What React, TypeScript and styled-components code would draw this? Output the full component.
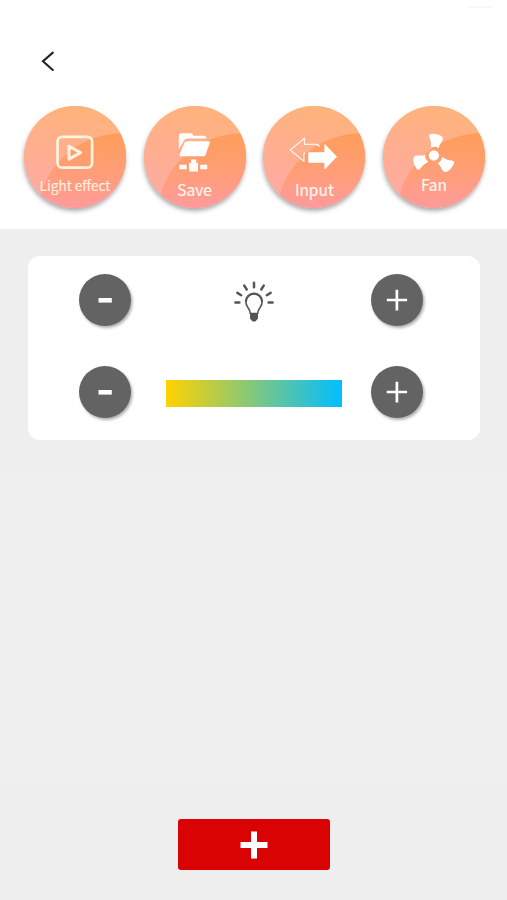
import React from "react";
import styled, { createGlobalStyle } from "styled-components";

const GlobalStyle = createGlobalStyle`
  * { box-sizing: border-box; }
  body { margin: 0; background: #eeeeee; font-family: "Noto Sans CJK SC", "Noto Sans", sans-serif; }
  button { border: 0; padding: 0; font: inherit; cursor: pointer; }
`;

const Screen = styled.main`
  width: 507px;
  height: 900px;
  display: flex;
  flex-direction: column;
  align-items: center;
  overflow: hidden;
  background: linear-gradient(#eeeeee 467px, #efefef 467px 788px, #eeeeee 788px);
`;

const Header = styled.header`
  width: 100%;
  height: 229px;
  flex: none;
  display: flex;
  flex-direction: column;
  background: #fff;
`;

const StatusBar = styled.div`
  height: 48px;
  padding: 6px 13px 0 0;
  display: flex;
  justify-content: flex-end;
`;

const StatusMark = styled.span`
  width: 26px;
  height: 2px;
  border-radius: 1px;
  background: #f8f8f8;
`;

const BackButton = styled.button`
  width: 28px;
  height: 28px;
  margin-left: 34px;
  background: none;
  svg { display: block; }
`;

const Actions = styled.nav`
  display: flex;
  justify-content: space-between;
  padding: 0 22px 0 24px;
  margin-top: 30px;
`;

const ActionButton = styled.button`
  position: relative;
  width: 102px;
  height: 102px;
  border-radius: 50%;
  background: linear-gradient(#ffb37b, #ffa09e);
  box-shadow: -0.5px 3px 4px rgba(70, 70, 70, 0.45);
`;

const Face = styled.svg`
  position: absolute;
  inset: 0;
  width: 100%;
  height: 100%;
  overflow: visible;
`;

const ActionLabel = styled.span<{ $top: number; $size: number; $color?: string }>`
  position: absolute;
  left: 0;
  right: 0;
  top: ${(p) => p.$top}px;
  line-height: 24px;
  font-size: ${(p) => p.$size}px;
  color: ${(p) => p.$color ?? "#fff5ee"};
  -webkit-text-stroke: 0.2px currentColor;
  white-space: nowrap;
  text-align: center;
`;

const Panel = styled.section`
  width: 452px;
  height: 184px;
  margin-top: 27px;
  padding: 18px 56.3px 22px 51px;
  display: flex;
  flex-direction: column;
  justify-content: space-between;
  border-radius: 12px;
  background: #fff;
`;

const ControlRow = styled.div`
  display: flex;
  align-items: center;
  justify-content: space-between;
`;

const RoundButton = styled.button`
  width: 52px;
  height: 52px;
  border-radius: 50%;
  background: #636363;
  box-shadow: 1.5px 2px 3px rgba(0, 0, 0, 0.32);
  svg { display: block; }
`;

const TemperatureBar = styled.div`
  width: 176px;
  height: 27px;
  margin: 3px 0 0 5.4px;
  background: linear-gradient(90deg, #ffd200, #00beff);
`;

const Bulb = styled.svg`
  display: block;
  margin: 3px 0 0 6px;
`;

const AddButton = styled.button`
  width: 152px;
  height: 51px;
  margin: auto 0 30px;
  border-radius: 3px;
  background: #d90303;
  svg { display: block; margin: auto; }
`;

const PlayIcon = () => (
  <g fill="none" stroke="#fff3df" strokeWidth="2.7" strokeLinejoin="round">
    <rect x="33.7" y="31" width="34.7" height="31" rx="4.5" />
    <path d="M45.2 40.4v13l11.6-6.5z" strokeWidth="3" />
  </g>
);

const FolderIcon = () => (
  <g fill="#fff">
    <path d="M35 43.5V30.5q0-3.2 3-3.2h8.5q2.3 0 3 2.5h11q2 0 2.5 2.8H43.5q-2.8 0-3.8 2.8z" />
    <path d="M44 35.3h21.2q1.5 0 1 1.5l-4.4 12.4q-.5 1.3-2 1.3H36.5q-1.2 0-.7-1.5l4.8-12q.7-1.7 3.4-1.7z" />
    <path d="M47.3 53.8h5.2v3.4h1.8v8.5h-9v-8.5h2zM35.5 59h7.3v4.5h-7.3zM56.5 59h7v4.5h-7z" />
  </g>
);

const ArrowsIcon = () => (
  <g transform="translate(0.5 0)">
    <path
      d="M56.3 40.6Q55.5 38.6 52 38.6H41.2v-6.3L26.8 44.2l13.8 11.3v-7.2q0-1.2 1.2-1.2"
      fill="none" stroke="#fff3e5" strokeWidth="1.3" strokeLinejoin="round"
    />
    <path d="M45.5 47h16.2v-8.2L73.3 51 61.7 63v-6.5H45.5z" fill="#fff" stroke="#fff" strokeWidth="1" strokeLinejoin="round" />
  </g>
);

const BLADE = "M-2.8-8Q-2.3-14-4.9-19.2-5.3-21.2-3.3-21.6 3.5-22.6 8-19.2 9.4-18 8.9-16C8-12.6 5.6-11.8 5-7.2Q1.2-9.6-2.8-8Z";

const FanIcon = () => (
  <g transform="translate(51.1 49.7)" fill="#fff">
    <circle r="5.2" />
    {[0, 120, 240].map((angle) => (
      <path key={angle} d={BLADE} transform={`rotate(${angle})`} />
    ))}
  </g>
);

const ACTIONS = [
  { label: "Light effect", Icon: PlayIcon, top: 67, size: 13.6, color: "#ffeedb" },
  { label: "Save", Icon: FolderIcon, top: 71, size: 15.5 },
  { label: "Input", Icon: ArrowsIcon, top: 71, size: 15.5 },
  { label: "Fan", Icon: FanIcon, top: 66, size: 15.5 },
];

const FaceBackground = ({ id }: { id: string }) => (
  <>
    <defs>
      <linearGradient id={`${id}-base`} x1="0.6" y1="0" x2="0.4" y2="1">
        <stop offset="0" stopColor="#ffb37b" />
        <stop offset="1" stopColor="#ffaaa5" />
      </linearGradient>
      <linearGradient id={`${id}-gloss`} x1="0" y1="28" x2="0" y2="102" gradientUnits="userSpaceOnUse">
        <stop offset="0" stopColor="#ff9d5c" />
        <stop offset="0.45" stopColor="#ff9e73" />
        <stop offset="1" stopColor="#ff9b9b" />
      </linearGradient>
      <clipPath id={`${id}-clip`}>
        <circle cx="51.25" cy="51.25" r="51.25" />
      </clipPath>
    </defs>
    <g clipPath={`url(#${id}-clip)`}>
      <rect width="102.5" height="102.5" fill={`url(#${id}-base)`} />
      <circle cx="98" cy="112" r="84.5" fill={`url(#${id}-gloss)`} />
    </g>
  </>
);

const Minus = () => (
  <svg width="52" height="52"><path d="M19.5 26.3h13.3" stroke="#fff" strokeWidth="4.6" /></svg>
);

const Plus = () => (
  <svg width="52" height="52"><path d="M15.8 26h20.3M25.9 15.8v20.8" stroke="#fff" strokeWidth="2.7" /></svg>
);

const BulbIcon = () => (
  <Bulb width="42" height="42" viewBox="0 0 42 42">
    <g stroke="#555" strokeWidth="2.5" strokeLinecap="round">
      <path d="M21 1.8v4.4M11.3 4.6l2.4 3.9M30.7 4.6l-2.4 3.9M4.4 11.9l3.8 2.3M37.6 11.9l-3.8 2.3M2.4 21.5h4M35.6 21.5h4" />
    </g>
    <path d="M17.4 33Q17.2 29.5 14.5 25.8 12.9 23.5 12.9 20.7a8.1 8.1 0 0 1 16.2 0q0 2.8-1.6 5.1Q24.8 29.5 24.6 33" fill="none" stroke="#555" strokeWidth="1.6" />
    <path d="M12.9 20.7a8.1 8.1 0 0 1 16.2 0" fill="none" stroke="#555" strokeWidth="2.2" />
    <path d="M17 31.7h8v5q0 1.5-1.3 2.3L22.4 40.5h-2.8L18.3 39q-1.3-.8-1.3-2.3z" fill="#555" />
  </Bulb>
);

export default function App() {
  return (
    <>
      <GlobalStyle />
      <Screen>
        <Header>
          <StatusBar><StatusMark /></StatusBar>
          <BackButton aria-label="Back">
            <svg width="28" height="28">
              <path d="M18.8 4.6L9 13.3l9.8 8.7" fill="none" stroke="#222" strokeWidth="2.1" strokeLinecap="round" />
            </svg>
          </BackButton>
          <Actions>
            {ACTIONS.map(({ label, Icon, top, size, color }, i) => (
              <ActionButton key={label}>
                <Face viewBox="0 0 102.5 102.5">
                  <FaceBackground id={`action-${i}`} />
                  <Icon />
                </Face>
                <ActionLabel $top={top} $size={size} $color={color}>{label}</ActionLabel>
              </ActionButton>
            ))}
          </Actions>
        </Header>
        <Panel>
          <ControlRow>
            <RoundButton aria-label="Decrease brightness"><Minus /></RoundButton>
            <BulbIcon />
            <RoundButton aria-label="Increase brightness"><Plus /></RoundButton>
          </ControlRow>
          <ControlRow>
            <RoundButton aria-label="Warmer"><Minus /></RoundButton>
            <TemperatureBar />
            <RoundButton aria-label="Cooler"><Plus /></RoundButton>
          </ControlRow>
        </Panel>
        <AddButton aria-label="Add">
          <svg width="28" height="28">
            <path d="M.5 14h27M14 .5v27" stroke="#fff" strokeWidth="6" />
          </svg>
        </AddButton>
      </Screen>
    </>
  );
}
